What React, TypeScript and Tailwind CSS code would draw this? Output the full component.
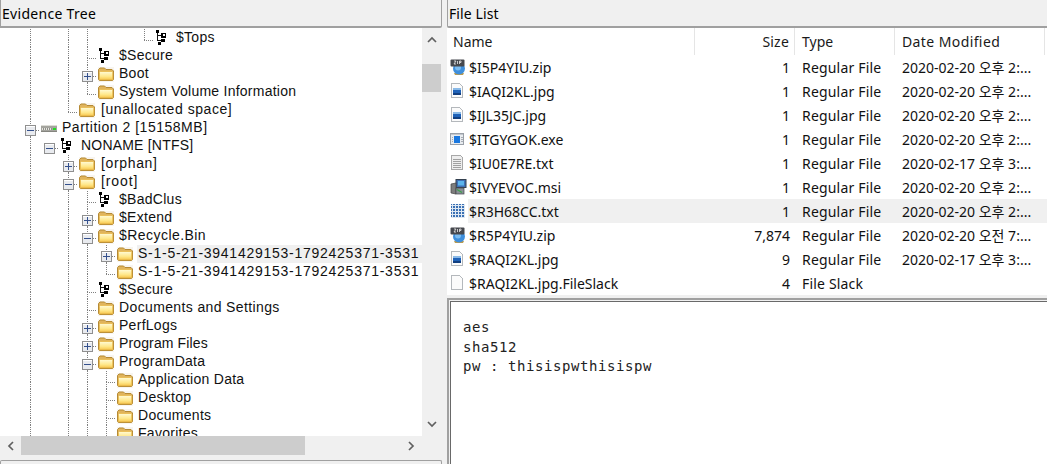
import React from "react";

type Cell = "n" | "l" | "t" | "e" | "p" | "m" | "pe" | "mt" | "mn";
type Ic = "folder" | "vol" | "part";
type R = { cells: Cell[]; icon: Ic; label: string; hi?: boolean; tr?: string };

const LINE = "#808080";

function TreeCell({ c }: { c: Cell }) {
  const up = ["l", "t", "e", "p", "m", "pe", "mt"].includes(c);
  const down = ["l", "t", "p", "m", "mt"].includes(c);
  const right = c !== "n" && c !== "l";
  const box = ["p", "m", "pe", "mt", "mn"].includes(c);
  const plus = c === "p" || c === "pe";
  return (
    <svg width="19" height="18" className="shrink-0 block" shapeRendering="crispEdges">
      {up && <line x1="9.5" y1="0" x2="9.5" y2="11" stroke={LINE} strokeDasharray="1 1" />}
      {down && <line x1="9.5" y1="11" x2="9.5" y2="18" stroke={LINE} strokeDasharray="1 1" />}
      {right && <line x1="9" y1="11.5" x2="19" y2="11.5" stroke={LINE} strokeDasharray="1 1" />}
      {box && (
        <>
          <rect x="4.5" y="6.5" width="10" height="10" fill="#e9ebef" stroke="#8f8f8f" />
          <rect x="5" y="7" width="9" height="1" fill="#ffffff" />
          <line x1="6" y1="11.5" x2="13" y2="11.5" stroke="#34508c" />
          {plus && <line x1="9.5" y1="8" x2="9.5" y2="15" stroke="#34508c" />}
        </>
      )}
    </svg>
  );
}

function Folder() {
  return (
    <svg width="16" height="15" viewBox="0 0 16 15" className="shrink-0 block">
      <defs>
        <linearGradient id="fg" x1="0" y1="0" x2="0" y2="1">
          <stop offset="0" stopColor="#fffbd8" />
          <stop offset="0.6" stopColor="#ffe88c" />
          <stop offset="1" stopColor="#f8c850" />
        </linearGradient>
      </defs>
      <rect x="0" y="0" width="16" height="15" fill="#f3efe6" opacity="0.6" />
      <path d="M.5 12.5V2.5L2 1h4.5L8 2.5h6L15.5 4v8.5l-1 1h-13z" fill="#e0b45c" stroke="#b58a35" strokeWidth="1" />
      <path d="M1.5 12.7V5.5l1-1h11.5l.7 1v7.2z" fill="url(#fg)" stroke="#e8b94a" strokeWidth="0.8" />
    </svg>
  );
}

function Vol() {
  return (
    <svg width="16" height="15" viewBox="0 0 16 15" className="shrink-0 block overflow-visible" shapeRendering="crispEdges">
      <g transform="translate(-2,-2)">
        <path d="M4.5 3v9M4.5 6.5h5M4.5 11.5h5" stroke="#111" fill="none" />
        <rect x="3" y="1" width="3" height="3" fill="#000" />
        <rect x="5" y="13" width="3" height="3" fill="#000" />
        <rect x="8" y="4" width="5" height="5" fill="#000" />
        <rect x="10" y="5" width="2" height="2" fill="#fff" />
        <rect x="8" y="10" width="4" height="3" fill="#000" />
      </g>
    </svg>
  );
}

function Part() {
  return (
    <svg width="17" height="16" viewBox="0 0 17 16" className="shrink-0 block" shapeRendering="crispEdges">
      <rect x="0" y="4" width="16" height="7" fill="#a4a49e" />
      <rect x="0" y="4" width="16" height="1" fill="#dcdcd6" />
      <rect x="1" y="7" width="10" height="2" fill="#e6e6e0" />
      <path d="M2 7v2M4 7v2M6 7v2M8 7v2M10 7v2" stroke="#8e8e88" />
      <rect x="12" y="7" width="3" height="2" fill="#22dd22" />
      <rect x="0" y="10" width="16" height="1" fill="#85857f" />
    </svg>
  );
}

const rows: R[] = [
  { cells: ["l", "n", "l", "l", "n", "n", "e"], icon: "vol", label: "$Tops" },
  { cells: ["l", "n", "l", "t"], icon: "vol", label: "$Secure" },
  { cells: ["l", "n", "l", "p"], icon: "folder", label: "Boot" },
  { cells: ["l", "n", "l", "e"], icon: "folder", label: "System Volume Information", tr: "tracking-[0.24px]" },
  { cells: ["l", "n", "e"], icon: "folder", label: "[unallocated space]", tr: "tracking-[0.56px] pl-[2px]" },
  { cells: ["m"], icon: "part", label: "Partition 2 [15158MB]", tr: "tracking-[0.52px]" },
  { cells: ["l", "mn"], icon: "vol", label: "NONAME [NTFS]", tr: "tracking-[0.2px]" },
  { cells: ["l", "n", "p"], icon: "folder", label: "[orphan]", tr: "tracking-[0.65px] pl-[2px]" },
  { cells: ["l", "n", "m"], icon: "folder", label: "[root]", tr: "tracking-[0.9px] pl-[2px]" },
  { cells: ["l", "n", "l", "t"], icon: "vol", label: "$BadClus" },
  { cells: ["l", "n", "l", "p"], icon: "folder", label: "$Extend" },
  { cells: ["l", "n", "l", "m"], icon: "folder", label: "$Recycle.Bin", tr: "tracking-[0.45px]" },
  { cells: ["l", "n", "l", "l", "p"], icon: "folder", label: "S-1-5-21-3941429153-1792425371-3531", hi: true, tr: "tracking-[0.74px]" },
  { cells: ["l", "n", "l", "l", "e"], icon: "folder", label: "S-1-5-21-3941429153-1792425371-3531", tr: "tracking-[0.74px]" },
  { cells: ["l", "n", "l", "t"], icon: "vol", label: "$Secure" },
  { cells: ["l", "n", "l", "t"], icon: "folder", label: "Documents and Settings", tr: "tracking-[0.37px]" },
  { cells: ["l", "n", "l", "p"], icon: "folder", label: "PerfLogs" },
  { cells: ["l", "n", "l", "p"], icon: "folder", label: "Program Files", tr: "tracking-[0.13px]" },
  { cells: ["l", "n", "l", "m"], icon: "folder", label: "ProgramData" },
  { cells: ["l", "n", "l", "l", "t"], icon: "folder", label: "Application Data" },
  { cells: ["l", "n", "l", "l", "t"], icon: "folder", label: "Desktop" },
  { cells: ["l", "n", "l", "l", "t"], icon: "folder", label: "Documents" },
  { cells: ["l", "n", "l", "l", "t"], icon: "folder", label: "Favorites" },
];

type FI = "zip" | "img" | "exe" | "txt" | "msi" | "grid" | "blank";
const files: { icon: FI; name: string; size: string; type: string; date: string; hi?: boolean }[] = [
  { icon: "zip", name: "$I5P4YIU.zip", size: "1", type: "Regular File", date: "2020-02-20 오후 2:..." },
  { icon: "img", name: "$IAQI2KL.jpg", size: "1", type: "Regular File", date: "2020-02-20 오후 2:..." },
  { icon: "img", name: "$IJL35JC.jpg", size: "1", type: "Regular File", date: "2020-02-20 오후 2:..." },
  { icon: "exe", name: "$ITGYGOK.exe", size: "1", type: "Regular File", date: "2020-02-20 오후 2:..." },
  { icon: "txt", name: "$IU0E7RE.txt", size: "1", type: "Regular File", date: "2020-02-17 오후 3:..." },
  { icon: "msi", name: "$IVYEVOC.msi", size: "1", type: "Regular File", date: "2020-02-20 오후 2:..." },
  { icon: "grid", name: "$R3H68CC.txt", size: "1", type: "Regular File", date: "2020-02-20 오후 2:...", hi: true },
  { icon: "zip", name: "$R5P4YIU.zip", size: "7,874", type: "Regular File", date: "2020-02-20 오전 7:..." },
  { icon: "img", name: "$RAQI2KL.jpg", size: "9", type: "Regular File", date: "2020-02-17 오후 3:..." },
  { icon: "blank", name: "$RAQI2KL.jpg.FileSlack", size: "4", type: "File Slack", date: "" },
];

function FileIcon({ k }: { k: FI }) {
  const page = <path d="M1.5 .5h8l3 3v11h-11z" fill="#fbfbfb" stroke="#b4b8bc" />;
  if (k === "zip")
    return (
      <svg width="17" height="16" viewBox="0 0 17 16" className="shrink-0 block">
        <path d="M4 14h10l-1 2H5z" fill="#b89a50" />
        <circle cx="9" cy="9.5" r="6" fill="#3f8fdc" />
        <circle cx="8" cy="8.5" r="3" fill="#7cbcf0" />
        <rect x="0.5" y="0.5" width="14" height="7" rx="1" fill="#46484e" />
        <path d="M4 2h2L4 5h2M7.5 2v3M9.5 5V2H11v1.5H9.5" stroke="#e8e8e8" fill="none" strokeWidth="0.8" />
      </svg>
    );
  if (k === "img")
    return (
      <svg width="16" height="16" viewBox="0 0 16 16" className="shrink-0 block" shapeRendering="crispEdges">
        {page}
        <rect x="3" y="5" width="8" height="7" fill="#1f62b8" />
        <rect x="3" y="5" width="8" height="2" fill="#8abae8" />
        <rect x="3" y="10" width="8" height="2" fill="#123f80" />
      </svg>
    );
  if (k === "exe")
    return (
      <svg width="16" height="16" viewBox="0 0 16 16" className="shrink-0 block" shapeRendering="crispEdges">
        <rect x="0.5" y="2.5" width="13" height="11" fill="#e8ecf0" stroke="#9aa0a8" />
        <rect x="1" y="3" width="12" height="1" fill="#c4c8ce" />
        <rect x="4" y="5" width="6" height="7" fill="#1a78e0" />
        <path d="M2 6h1M2 8h1M2 10h1M11 6h2M11 8h2M11 10h2" stroke="#a8acb4" />
      </svg>
    );
  if (k === "txt")
    return (
      <svg width="16" height="16" viewBox="0 0 16 16" className="shrink-0 block" shapeRendering="crispEdges">
        <path d="M1.5 .5h9l2 2v12h-11z" fill="#eeeeee" stroke="#a8a8a8" />
        <path d="M3 4h8M3 6h8M3 8h8M3 10h8M3 12h8" stroke="#a0a0a0" />
      </svg>
    );
  if (k === "msi")
    return (
      <svg width="17" height="16" viewBox="0 0 17 16" className="shrink-0 block">
        <rect x="6" y="0.5" width="10" height="8" fill="#3f6fb4" stroke="#33404f" />
        <rect x="8" y="2" width="6" height="4.5" fill="#5cb4ec" />
        <path d="M1 5l5-1v11l-5-1z" fill="#7d7d7d" stroke="#444" strokeWidth="0.7" />
        <rect x="6" y="9" width="8" height="6" fill="#8a8f96" stroke="#44484e" strokeWidth="0.7" />
        <path d="M7 10.5l5 3" stroke="#3ba34a" strokeWidth="1.4" />
      </svg>
    );
  if (k === "grid")
    return (
      <svg width="16" height="16" viewBox="0 0 16 16" className="shrink-0 block" shapeRendering="crispEdges">
        <defs>
          <pattern id="gp" width="3" height="3" patternUnits="userSpaceOnUse">
            <rect width="3" height="3" fill="#3a70b4" />
            <rect x="2" width="1" height="3" fill="#dfe8f2" />
            <rect y="2" width="3" height="1" fill="#dfe8f2" />
          </pattern>
        </defs>
        <rect x="1" y="1" width="14" height="14" fill="url(#gp)" />
      </svg>
    );
  return (
    <svg width="16" height="16" viewBox="0 0 16 16" className="shrink-0 block" shapeRendering="crispEdges">
      {page}
    </svg>
  );
}

function Chev({ d }: { d: "u" | "d" | "l" | "r" }) {
  const p = { u: "M2 8l4-4 4 4", d: "M2 4l4 4 4-4", l: "M8 2L4 6l4 4", r: "M4 2l4 4-4 4" }[d];
  return (
    <svg width="12" height="12" viewBox="0 0 12 12" className="block">
      <path d={p} fill="none" stroke="#606060" strokeWidth="1.7" />
    </svg>
  );
}

const tree = { fontFamily: '"Liberation Sans", "Noto Sans CJK KR", sans-serif' };
const ui = { fontFamily: '"Noto Sans", "Open Sans", "Noto Sans CJK KR", sans-serif' };

export default function App() {
  return (
    <div className="w-[1047px] h-[464px] overflow-hidden bg-[#f0f0f0] flex text-black">
      {/* left */}
      <div className="w-[442px] shrink-0 flex flex-col">
        <div style={ui} className="h-[28px] shrink-0 border-b-2 border-r border-l border-[#a0a0a0] rounded-br-[2px] pl-[1px] text-[14px] leading-[27px] tracking-[0.3px] bg-[#f0f0f0]">
          Evidence Tree
        </div>
        <div className="h-[408px] flex shrink-0 overflow-hidden">
          <div className="w-[422px] bg-white overflow-hidden pt-[1px]" style={tree}>
            {rows.map((r, i) => (
              <div key={i} className="h-[18px] flex pl-[21px] whitespace-nowrap">
                {r.cells.map((c, j) => (
                  <TreeCell key={j} c={c} />
                ))}
                <div className="w-[21px] h-[18px] pl-[1px] pt-[2px] shrink-0">
                  {r.icon === "folder" ? <Folder /> : r.icon === "vol" ? <Vol /> : <Part />}
                </div>
                <div className={`grow text-[14px] leading-[17px] text-[#111] overflow-hidden ${r.tr ?? "tracking-[0.28px] pl-[1px]"} ${r.tr && !r.tr.includes("pl-") ? "pl-[1px]" : ""} ${r.hi ? "bg-[#f0f0f0]" : ""}`}>
                  {r.label}
                </div>
              </div>
            ))}
          </div>
          <div className="w-[19px] flex flex-col items-center bg-[#f0f0f0]">
            <div className="h-[36px] w-full flex items-start justify-center pt-[6px]">
              <Chev d="u" />
            </div>
            <div className="w-full h-[28px] bg-[#cdcdcd]" />
            <div className="grow" />
            <div className="h-[24px] w-full flex items-center justify-center">
              <Chev d="d" />
            </div>
          </div>
        </div>
        <div className="h-[19px] w-[422px] flex items-center shrink-0">
          <div className="w-[21px] flex justify-center">
            <Chev d="l" />
          </div>
          <div className="w-[284px] h-full bg-[#cdcdcd]" />
          <div className="grow flex justify-end pr-[5px]">
            <Chev d="r" />
          </div>
        </div>
        <div className="mt-[5px] h-[6px] border border-b-0 border-[#a0a0a0] rounded-t-[2px]" />
      </div>

      <div className="w-[5px] shrink-0" />

      {/* right */}
      <div className="grow flex flex-col min-w-0">
        <div style={ui} className="h-[28px] shrink-0 border-b-2 border-l border-[#a0a0a0] rounded-bl-[2px] pl-[1px] text-[14px] leading-[27px] tracking-[0.1px]">
          File List
        </div>
        <div style={ui} className="h-[267px] shrink-0 bg-white text-[14px] pl-[1px] overflow-hidden">
          <div className="h-[27px] flex leading-[28px] text-[#1a1a1a]">
            <div className="w-[247px] shrink-0 pl-[5px] border-r border-[#e5e5e5]">Name</div>
            <div className="w-[100px] shrink-0 pr-[5px] text-right tracking-[0.2px] border-r border-[#e5e5e5]">Size</div>
            <div className="w-[100px] shrink-0 pl-[7px] border-r border-[#e5e5e5]">Type</div>
            <div className="w-[150px] shrink-0 pl-[7px] tracking-[0.4px] border-r border-[#e5e5e5]">Date Modified</div>
          </div>
          {files.map((f, i) => (
            <div key={i} className="h-[24px] flex leading-[26px] whitespace-nowrap">
              <div className="w-[20px] pl-[2px] pt-[4px] shrink-0">
                <FileIcon k={f.icon} />
              </div>
              <div className={`grow flex h-[24px] ${f.hi ? "bg-[#f0f0f0]" : ""}`}>
                <div className="w-[227px] shrink-0 pl-[1px] text-[#111]">{f.name}</div>
                <div className="w-[100px] shrink-0 pr-[5px] text-right text-[#111]">{f.size}</div>
                <div className="w-[100px] shrink-0 pl-[7px] tracking-[0.18px] text-[#111]">{f.type}</div>
                <div className="w-[150px] shrink-0 pl-[7px] text-[#111]">{f.date}</div>
              </div>
            </div>
          ))}
        </div>
        <div className="grow border-t-2 border-l-2 border-[#a0a0a0] mt-[3px] pt-[1px] pl-[1px]">
          <div className="h-full bg-white border-t border-l border-[#696969] pl-[12px] pt-[16px] text-[14px] leading-[19.5px] tracking-[0.57px] text-[#222]" style={{ fontFamily: '"DejaVu Sans Mono", monospace' }}>
            <div>aes</div>
            <div>sha512</div>
            <div>pw : thisispwthisispw</div>
          </div>
        </div>
      </div>
    </div>
  );
}
